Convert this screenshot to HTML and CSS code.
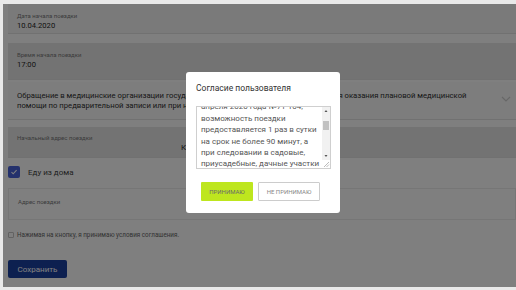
FILE: index.html
```html
<!DOCTYPE html>
<html lang="ru">
<head>
<meta charset="utf-8">
<title>Поездка</title>
<link rel="stylesheet" href="styles.css">
</head>
<body>
<div class="frame">
  <main class="page">
    <div class="form">
      <div class="field field--first">
        <div class="field__label">Дата начала поездки</div>
        <div class="field__value">10.04.2020</div>
      </div>
      <div class="field field--filled field--time">
        <div class="field__label">Время начала поездки</div>
        <div class="field__value">17:00</div>
      </div>
      <div class="field field--select">
        <div class="select__text">Обращение в медицинские организации государственной системы здравоохранения для оказания плановой медицинской<br>помощи по предварительной записи или при наличии направления</div>
        <svg class="chevron" width="10" height="6" viewBox="0 0 10 6"><polyline points="1,1 5,5 9,1" fill="none" stroke="#cfcfcf" stroke-width="1.2"/></svg>
      </div>
      <div class="field field--filled field--address">
        <div class="field__label">Начальный адрес поездки</div>
        <div class="field__value field__value--shift">Кемерово, ул. Весенняя, 12</div>
      </div>
      <label class="check">
        <span class="check__box"><svg width="8" height="8" viewBox="0 0 8 8"><polyline points="1.5,4.2 3.2,5.8 6.6,2.2" fill="none" stroke="#fff" stroke-width="1.1"/></svg></span>
        <span class="check__text">Еду из дома</span>
      </label>
      <div class="field field--outlined">
        <div class="field__label">Адрес поездки</div>
      </div>
      <label class="agree">
        <span class="agree__box"></span>
        <span class="agree__text">Нажимая на кнопку, я принимаю условия соглашения.</span>
      </label>
      <button class="save" type="button">Сохранить</button>
    </div>

    <div class="overlay"></div>

    <div class="modal" role="dialog">
      <div class="modal__title">Согласие пользователя</div>
      <div class="terms">
        <div class="terms__text">с распоряжением Губернатора от 3<br>апреля 2020 года №71-104,<br>возможность поездки<br>предоставляется 1 раз в сутки<br>на срок не более 90 минут, а<br>при следовании в садовые,<br>приусадебные, дачные участки<br>не более 1 раза в неделю.</div>
        <div class="scrollbar">
          <span class="scrollbar__btn"><svg width="8" height="8" viewBox="0 0 8 8"><polygon points="2.5,5 5.5,5 4,3" fill="#555"/></svg></span>
          <span class="scrollbar__track"><span class="scrollbar__thumb"></span></span>
          <span class="scrollbar__btn"><svg width="8" height="8" viewBox="0 0 8 8"><polygon points="2.5,3 5.5,3 4,5" fill="#555"/></svg></span>
          <span class="scrollbar__corner"><svg width="8" height="8" viewBox="0 0 8 8"><path d="M7 2 L2 7 M7 4.5 L4.5 7" stroke="#aaa" stroke-width="0.8"/></svg></span>
        </div>
      </div>
      <div class="modal__actions">
        <button class="btn btn--accept" type="button">Принимаю</button>
        <button class="btn btn--decline" type="button">Не принимаю</button>
      </div>
    </div>
  </main>
</div>
</body>
</html>
```

FILE: styles.css
```css
html, body {
  margin: 0;
  height: 100%;
}

body {
  background: #e9e9e9;
  font-family: Roboto, "Noto Sans", sans-serif;
  overflow: hidden;
}

.frame {
  height: 290px;
  box-sizing: border-box;
  padding: 4px 0 3px 3px;
}

.page {
  position: relative;
  height: 100%;
  background: #fff;
  overflow: hidden;
}

.form {
  display: flex;
  flex-direction: column;
  padding-left: 5px;
}

.field {
  box-sizing: border-box;
  background: #f5f5f5;
  border-bottom: 1px solid #e2e2e2;
  padding: 8px 9px 0;
}

.field__label {
  font-size: 6px;
  line-height: 7px;
  color: #787878;
  white-space: nowrap;
}

.field__value {
  margin-top: 2px;
  font-size: 7.6px;
  line-height: 10px;
  color: #262626;
  white-space: nowrap;
}

.field__value--shift {
  margin-left: 164px;
  font-size: 8px;
}

.field--first {
  height: 30px;
}

.field--filled {
  background: #e6e6e6;
}

.field--time {
  margin-top: 9px;
  height: 37px;
  padding-top: 7.5px;
}

.field--select {
  margin-top: 2px;
  height: 38px;
  padding: 0 5px 0 9px;
  background: #fafafa;
  display: flex;
  align-items: center;
  gap: 8px;
}

.select__text {
  flex: 1;
  font-size: 7.7px;
  line-height: 10px;
  color: #2e2e2e;
  white-space: nowrap;
  overflow: hidden;
}

.chevron {
  flex: none;
  margin-top: -3px;
}

.field--address {
  margin-top: 7px;
  height: 31px;
  padding-top: 6.5px;
}

.check {
  margin-top: 8px;
  height: 12px;
  display: flex;
  align-items: center;
  gap: 8px;
}

.check__box {
  width: 12px;
  height: 12px;
  box-sizing: border-box;
  border-radius: 2px;
  background: #4862d8;
  display: flex;
  align-items: center;
  justify-content: center;
}

.check__box svg {
  display: block;
}

.check__text {
  font-size: 8px;
  color: #444;
}

.field--outlined {
  margin-top: 10px;
  height: 32px;
  padding-top: 8.5px;
  background: #fff;
  border: 1px solid #ececec;
}

.agree {
  margin-top: 11px;
  height: 8px;
  display: flex;
  align-items: center;
  gap: 3px;
}

.agree__box {
  width: 6px;
  height: 6px;
  box-sizing: border-box;
  border: 1px solid #c4c4c4;
  border-radius: 1px;
  background: #fff;
}

.agree__text {
  font-size: 6.3px;
  line-height: 8px;
  color: #666;
  white-space: nowrap;
}

.save {
  margin-top: 21px;
  align-self: flex-start;
  width: 59px;
  height: 18px;
  padding: 0;
  border: 0;
  border-radius: 2px;
  background: #1a40a0;
  color: #fff;
  font-family: inherit;
  font-size: 8px;
}

.overlay {
  position: absolute;
  inset: 0;
  background: rgba(0, 0, 0, 0.5);
}

.modal {
  position: absolute;
  left: 183px;
  top: 68px;
  width: 154px;
  height: 141px;
  box-sizing: border-box;
  padding: 10px 9px 12px 10px;
  background: #fff;
  border-radius: 3px;
  display: flex;
  flex-direction: column;
}

.modal__title {
  font-size: 8.5px;
  line-height: 12px;
  color: #333;
  white-space: nowrap;
}

.terms {
  margin-top: 12px;
  height: 63px;
  box-sizing: border-box;
  border: 1px solid #cfcfcf;
  display: flex;
  overflow: hidden;
}

.terms__text {
  flex: 1;
  margin-top: -17px;
  padding: 0 2px 0 4px;
  font-size: 8px;
  line-height: 11.4px;
  color: #555;
  white-space: nowrap;
  overflow: hidden;
}

.scrollbar {
  flex: none;
  width: 8px;
  display: flex;
  flex-direction: column;
  background: #f1f1f1;
}

.scrollbar__btn,
.scrollbar__corner {
  height: 8px;
  flex: none;
}

.scrollbar__btn svg,
.scrollbar__corner svg {
  display: block;
}

.scrollbar__corner {
  background: #fff;
}

.scrollbar__track {
  flex: 1;
  display: flex;
  flex-direction: column;
  align-items: center;
}

.scrollbar__thumb {
  margin-top: 6px;
  width: 6px;
  height: 9px;
  background: #c1c1c1;
}

.modal__actions {
  margin-top: 13px;
  padding-left: 5px;
  display: flex;
  gap: 5px;
}

.btn {
  height: 19px;
  box-sizing: border-box;
  padding: 0;
  font-family: inherit;
  font-size: 6px;
  text-transform: uppercase;
  border-radius: 1px;
}

.btn--accept {
  width: 52px;
  border: 0;
  background: #bee61e;
  color: #6a6a6a;
}

.btn--decline {
  width: 62px;
  border: 1px solid #cccccc;
  background: #fff;
  color: #888;
}
```
